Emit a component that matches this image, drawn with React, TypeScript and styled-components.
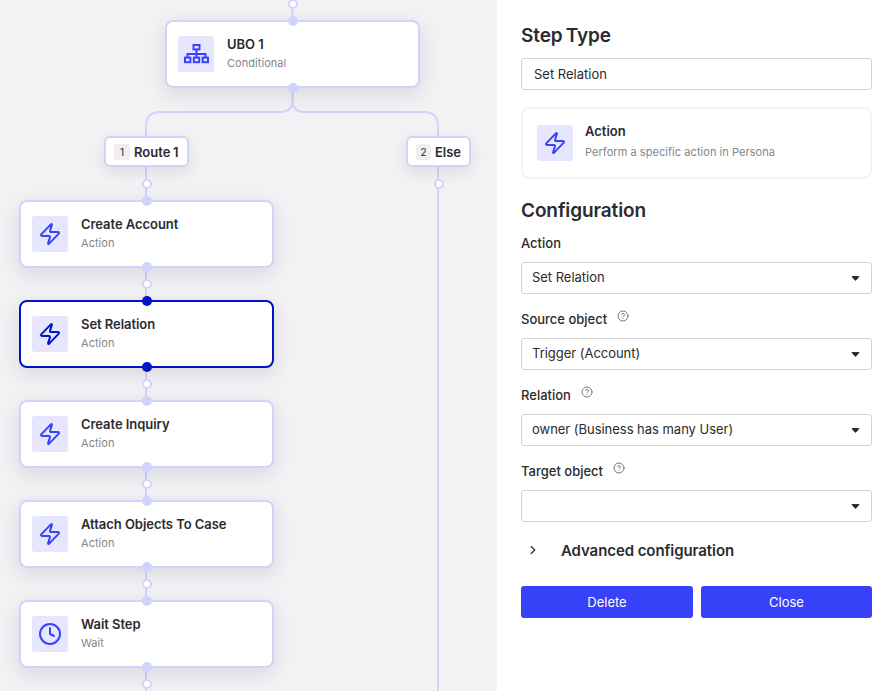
import React from 'react'
import styled, { createGlobalStyle } from 'styled-components'
import { ChevronRight, CircleHelp, Clock, Zap } from 'lucide-react'

const INK = '#2b2b2e'
const MUTED = '#85858a'
const BLUE = '#3843f9'
const DARK_BLUE = '#0016c4'
const LINE = '#d0d3fd'

const GlobalStyle = createGlobalStyle`
    html, body {
        margin: 0;
        padding: 0;
    }
    body {
        font-family: Inter, "Liberation Sans", sans-serif;
        color: ${INK};
        -webkit-font-smoothing: antialiased;
    }
`

const Page = styled.div`
    display: flex;
    width: 891px;
    height: 691px;
    overflow: hidden;
    background: #fff;
`

const Canvas = styled.div`
    position: relative;
    flex: 0 0 497px;
    height: 100%;
    overflow: hidden;
    background: #f2f2f5;
`

const Wires = styled.svg`
    position: absolute;
    inset: 0;
`

const NodeCard = styled.div<{ $x: number; $y: number; $selected?: boolean }>`
    position: absolute;
    left: ${(p) => p.$x}px;
    top: ${(p) => p.$y}px;
    box-sizing: border-box;
    display: flex;
    align-items: center;
    gap: 13px;
    width: 255px;
    height: 68px;
    padding: 0 11px;
    background: #fff;
    border: 2px solid ${(p) => (p.$selected ? DARK_BLUE : LINE)};
    border-radius: 8px;
    box-shadow: 0 6px 20px rgba(30, 30, 60, 0.12);
`

const IconTile = styled.div<{ $color?: string }>`
    flex: none;
    display: flex;
    align-items: center;
    justify-content: center;
    width: 36px;
    height: 36px;
    border-radius: 3px;
    background: #e6e7fe;
    color: ${(p) => p.$color || BLUE};
`

const NodeText = styled.div`
    display: flex;
    flex-direction: column;
    gap: 4px;
    padding-bottom: 2px;
`

const NodeTitle = styled.div`
    font-size: 13px;
    line-height: 16px;
    font-weight: 600;
    letter-spacing: -0.05px;
    color: ${INK};
`

const NodeSub = styled.div`
    font-size: 11px;
    line-height: 15px;
    letter-spacing: 0.05px;
    color: ${MUTED};
`

const RouteChip = styled.div<{ $x: number; $width: number }>`
    position: absolute;
    left: ${(p) => p.$x}px;
    top: 136px;
    box-sizing: border-box;
    display: flex;
    align-items: center;
    gap: 4px;
    width: ${(p) => p.$width}px;
    height: 31px;
    padding: 0 8px;
    background: #fff;
    border: 2px solid ${LINE};
    border-radius: 6px;
    box-shadow: 0 5px 14px rgba(30, 30, 60, 0.1);
    font-size: 13px;
    font-weight: 600;
    white-space: nowrap;
    word-spacing: -0.5px;
`

const RouteIndex = styled.span`
    display: flex;
    align-items: center;
    justify-content: center;
    width: 16px;
    height: 16px;
    border-radius: 3px;
    background: #efeff1;
    font-size: 10px;
    font-weight: 400;
`

const Port = styled.div<{ $x: number; $y: number; $kind: 'solid' | 'hollow' | 'active' }>`
    position: absolute;
    left: ${(p) => p.$x}px;
    top: ${(p) => p.$y}px;
    box-sizing: border-box;
    transform: translate(-50%, -50%);
    width: 10px;
    height: 10px;
    border-radius: 50%;
    background: ${(p) => (p.$kind === 'hollow' ? '#fff' : p.$kind === 'active' ? DARK_BLUE : LINE)};
    border: ${(p) => (p.$kind === 'hollow' ? `2px solid ${LINE}` : 'none')};
`

const Panel = styled.aside`
    flex: 1;
    box-sizing: border-box;
    height: 100%;
    padding: 23px 19px 0 24px;
    background: #fff;
`

const Heading = styled.h2<{ $top?: number }>`
    margin: ${(p) => p.$top || 0}px 0 0;
    font-size: 19px;
    line-height: 26px;
    font-weight: 600;
    letter-spacing: -0.1px;
    word-spacing: -1.5px;
    color: ${INK};
`

const NameField = styled.div`
    box-sizing: border-box;
    display: flex;
    align-items: center;
    height: 32px;
    margin-top: 9px;
    padding: 0 12px;
    border: 1px solid #d2d2d5;
    border-radius: 3px;
    font-size: 13px;
`

const InfoCard = styled.div`
    box-sizing: border-box;
    display: flex;
    align-items: center;
    gap: 12px;
    height: 72px;
    margin-top: 17px;
    padding: 0 14px;
    border: 2px solid #f3f3f4;
    border-radius: 8px;
`

const InfoText = styled.div`
    display: flex;
    flex-direction: column;
    gap: 6px;
    padding-bottom: 3px;
`

const InfoTitle = styled.div`
    font-size: 13px;
    line-height: 16px;
    font-weight: 600;
`

const InfoSub = styled.div`
    font-size: 11px;
    line-height: 15px;
    letter-spacing: 0.05px;
    color: ${MUTED};
`

const Field = styled.div<{ $first?: boolean }>`
    margin-top: ${(p) => (p.$first ? 11 : 17)}px;
`

const Label = styled.div`
    display: flex;
    align-items: flex-start;
    gap: 10px;
    height: 16px;
    font-size: 13px;
    line-height: 16px;
    font-weight: 500;
    color: ${INK};
`

const HelpIcon = styled(CircleHelp)`
    width: 12px;
    height: 12px;
    margin-top: -1px;
    color: #77777c;
`

const SelectBox = styled.div`
    box-sizing: border-box;
    display: flex;
    align-items: center;
    justify-content: space-between;
    height: 32px;
    margin-top: 11px;
    padding: 0 11px 2px 10px;
    border: 1px solid #d2d2d5;
    border-radius: 3px;
    font-size: 13px;
    letter-spacing: -0.03px;
`

const Advanced = styled.div`
    display: flex;
    align-items: center;
    gap: 21px;
    height: 20px;
    margin-top: 18px;
    padding-left: 5px;
    font-size: 15px;
    font-weight: 600;
    letter-spacing: -0.08px;
`

const Actions = styled.div`
    display: grid;
    grid-template-columns: 172px 171px;
    gap: 8px;
    margin-top: 26px;
`

const Button = styled.button`
    height: 32px;
    padding: 0;
    border: none;
    border-radius: 3px;
    background: ${BLUE};
    color: #fff;
    font-family: inherit;
    font-size: 13px;
`

const CaretMark = styled.svg`
    margin-top: 2px;
`

const Caret = () => (
    <CaretMark width="9" height="5" viewBox="0 0 9 5">
        <path d="M1 .6h7L4.5 4.4z" fill="#2b2b2e" stroke="#2b2b2e" strokeWidth="1" strokeLinejoin="round" />
    </CaretMark>
)

const NetworkIcon = () => (
    <svg width="25" height="20" viewBox="0 0 25 20" fill="none" stroke="currentColor" strokeWidth="2">
        <rect x="9.5" y="1" width="6" height="4.4" />
        <path d="M12.5 5.4V10M3.5 13.5V10h18v3.5M12.5 10v3.5" />
        <rect x="1" y="13.6" width="5.4" height="4.6" />
        <rect x="9.8" y="13.6" width="5.4" height="4.6" />
        <rect x="18.6" y="13.6" width="5.4" height="4.6" />
    </svg>
)

const steps = [
    { title: 'Create Account', sub: 'Action', y: 200 },
    { title: 'Set Relation', sub: 'Action', y: 300, selected: true },
    { title: 'Create Inquiry', sub: 'Action', y: 400 },
    { title: 'Attach Objects To Case', sub: 'Action', y: 500 },
    { title: 'Wait Step', sub: 'Wait', y: 600 },
]

const fields = [
    { label: 'Source object', value: 'Trigger (Account)' },
    { label: 'Relation', value: 'owner (Business has many User)' },
    { label: 'Target object', value: '' },
]

const App = () => {
    return (
        <Page>
            <GlobalStyle />
            <Canvas>
                <Wires width="497" height="691" fill="none" stroke={LINE} strokeWidth="2">
                    <path d="M292.5 0V88" />
                    <path d="M292.5 88v12q0 12-12 12H160q-14 0-14 14V691" />
                    <path d="M292.5 88v12q0 12 12 12H424q14 0 14 14V691" />
                </Wires>

                <NodeCard $x={165} $y={20}>
                    <IconTile><NetworkIcon /></IconTile>
                    <NodeText>
                        <NodeTitle>UBO 1</NodeTitle>
                        <NodeSub>Conditional</NodeSub>
                    </NodeText>
                </NodeCard>

                <RouteChip $x={104} $width={85}>
                    <RouteIndex>1</RouteIndex>
                    Route 1
                </RouteChip>
                <RouteChip $x={406} $width={65}>
                    <RouteIndex>2</RouteIndex>
                    Else
                </RouteChip>

                {steps.map((step) => (
                    <NodeCard key={step.title} $x={19} $y={step.y} $selected={step.selected}>
                        <IconTile $color={step.selected ? DARK_BLUE : BLUE}>
                            {step.sub === 'Wait' ? <Clock size={24} strokeWidth={2} /> : <Zap size={24} strokeWidth={2} />}
                        </IconTile>
                        <NodeText>
                            <NodeTitle>{step.title}</NodeTitle>
                            <NodeSub>{step.sub}</NodeSub>
                        </NodeText>
                    </NodeCard>
                ))}

                <Port $x={292.5} $y={4} $kind="hollow" />
                <Port $x={292.5} $y={20.5} $kind="solid" />
                <Port $x={292.5} $y={87.5} $kind="solid" />
                <Port $x={146.5} $y={184} $kind="hollow" />
                <Port $x={438.5} $y={184} $kind="hollow" />
                {steps.map((step) => (
                    <React.Fragment key={step.y}>
                        <Port $x={146.5} $y={step.y + 0.5} $kind={step.selected ? 'active' : 'solid'} />
                        <Port $x={146.5} $y={step.y + 67} $kind={step.selected ? 'active' : 'solid'} />
                        <Port $x={146.5} $y={step.y + 84} $kind="hollow" />
                    </React.Fragment>
                ))}
            </Canvas>

            <Panel>
                <Heading>Step Type</Heading>
                <NameField>Set Relation</NameField>
                <InfoCard>
                    <IconTile><Zap size={24} strokeWidth={2} /></IconTile>
                    <InfoText>
                        <InfoTitle>Action</InfoTitle>
                        <InfoSub>Perform a specific action in Persona</InfoSub>
                    </InfoText>
                </InfoCard>

                <Heading $top={19}>Configuration</Heading>
                <Field $first>
                    <Label>Action</Label>
                    <SelectBox>Set Relation<Caret /></SelectBox>
                </Field>
                {fields.map((field) => (
                    <Field key={field.label}>
                        <Label>
                            {field.label}
                            <HelpIcon />
                        </Label>
                        <SelectBox><span>{field.value}</span><Caret /></SelectBox>
                    </Field>
                ))}

                <Advanced>
                    <ChevronRight size={14} strokeWidth={2} />
                    Advanced configuration
                </Advanced>
                <Actions>
                    <Button>Delete</Button>
                    <Button>Close</Button>
                </Actions>
            </Panel>
        </Page>
    )
}

export default App
